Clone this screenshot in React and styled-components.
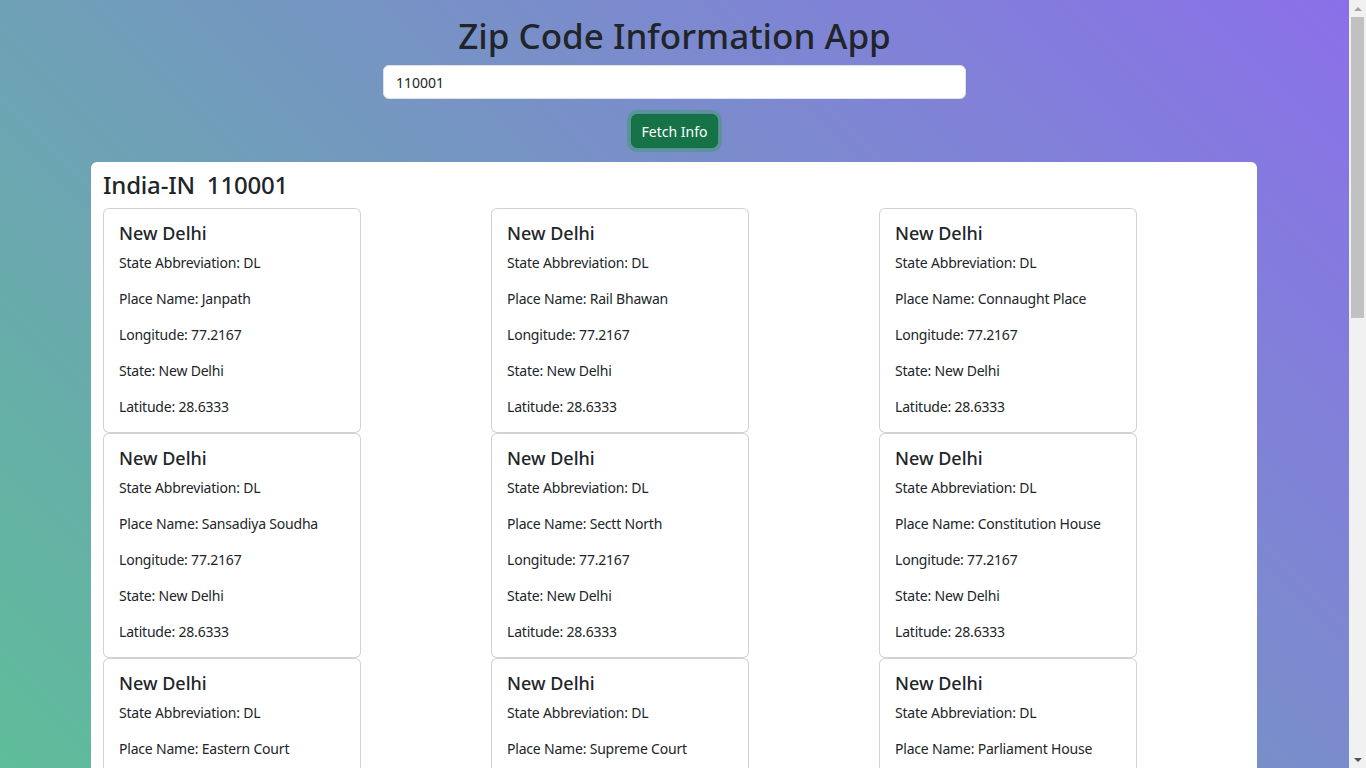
import React, { useState } from "react";
import styled, { createGlobalStyle } from "styled-components";

const GlobalStyle = createGlobalStyle`
  html, body {
    margin: 0;
  }
  body {
    padding-right: 17px;
    font-family: "Noto Sans", "Open Sans", sans-serif;
    color: #212529;
    min-height: 100vh;
    background: linear-gradient(45deg, #5ebd99 0%, #8b6fea 100%) fixed;
  }
`;

const Page = styled.div`
  display: flex;
  flex-direction: column;
  align-items: center;
  padding: 15px 0 40px;
`;

const Title = styled.h1`
  margin: 0 0 8px;
  font-size: 35px;
  font-weight: 500;
  line-height: 1.2;
`;

const SearchInput = styled.input`
  box-sizing: border-box;
  width: 583px;
  height: 34px;
  padding: 0 12px;
  font: inherit;
  font-size: 14px;
  color: #212529;
  background: #fff;
  border: 1px solid #dee2e6;
  border-radius: 6px;
  outline: none;
`;

const FetchButton = styled.button`
  margin-top: 15px;
  height: 34px;
  padding: 0 10px;
  font: inherit;
  font-size: 14px;
  color: #fff;
  background: #157347;
  border: 1px solid #146c43;
  border-radius: 6px;
  box-shadow: 0 0 0 4px rgba(60, 153, 110, 0.5);
  cursor: pointer;
`;

const ResultsPanel = styled.section`
  box-sizing: border-box;
  width: 1166px;
  margin: 14px 1px 0 0;
  padding-top: 9px;
  background: #fff;
  border-radius: 6px;
`;

const CountryHeading = styled.h3`
  margin: 0 12px 8px;
  font-size: 24px;
  font-weight: 500;
  line-height: 1.2;
  letter-spacing: -0.2px;
  span + span {
    margin-left: 12px;
  }
`;

const CardGrid = styled.div`
  display: grid;
  grid-template-columns: repeat(3, 388px);
`;

const Cell = styled.div`
  padding: 0 12px;
`;

const PlaceCard = styled.div`
  box-sizing: border-box;
  width: 258px;
  padding: 12px 15px 15px;
  border: 1px solid rgba(0, 0, 0, 0.175);
  border-radius: 6px;
  background: #fff;
`;

const CardTitle = styled.h5`
  margin: 0 0 8px;
  font-size: 18px;
  font-weight: 500;
  line-height: 24px;
`;

const Field = styled.p`
  margin: 0 0 16px;
  font-size: 14px;
  line-height: 20px;
  letter-spacing: -0.2px;
  &:last-child {
    margin-bottom: 0;
  }
`;

/* window scrollbar, as the browser shows it in the reference */
const ScrollTrack = styled.div`
  position: fixed;
  top: 0;
  right: 0;
  bottom: 0;
  width: 17px;
  background: #f1f1f1;
  display: flex;
  flex-direction: column;
  align-items: center;
`;

const ScrollArrow = styled.div`
  flex: none;
  width: 17px;
  height: 17px;
  display: flex;
  align-items: center;
  justify-content: center;
  &::before {
    content: "";
    border-left: 4px solid transparent;
    border-right: 4px solid transparent;
    ${(p) =>
      p.$down
        ? "border-top: 4px solid #505050;"
        : "border-bottom: 4px solid #a3a3a3;"}
  }
`;

const ScrollThumb = styled.div`
  width: 13px;
  height: 301px;
  background: #c1c1c1;
`;

const Spacer = styled.div`
  flex: 1;
`;

const places = [
  "Janpath",
  "Rail Bhawan",
  "Connaught Place",
  "Sansadiya Soudha",
  "Sectt North",
  "Constitution House",
  "Eastern Court",
  "Supreme Court",
  "Parliament House",
  "Pandara Road",
  "Shastri Bhawan",
  "Baroda House",
];

const App = () => {
  const [zip, setZip] = useState("110001");

  return (
    <>
      <GlobalStyle />
      <Page>
        <Title>Zip Code Information App</Title>
        <SearchInput value={zip} onChange={(e) => setZip(e.target.value)} />
        <FetchButton>Fetch Info</FetchButton>
        <ResultsPanel>
          <CountryHeading>
            <span>India-IN</span>
            <span>110001</span>
          </CountryHeading>
          <CardGrid>
            {places.map((name) => (
              <Cell key={name}>
                <PlaceCard>
                  <CardTitle>New Delhi</CardTitle>
                  <Field>State Abbreviation: DL</Field>
                  <Field>Place Name: {name}</Field>
                  <Field>Longitude: 77.2167</Field>
                  <Field>State: New Delhi</Field>
                  <Field>Latitude: 28.6333</Field>
                </PlaceCard>
              </Cell>
            ))}
          </CardGrid>
        </ResultsPanel>
      </Page>
      <ScrollTrack>
        <ScrollArrow />
        <ScrollThumb />
        <Spacer />
        <ScrollArrow $down />
      </ScrollTrack>
    </>
  );
};

export default App;
